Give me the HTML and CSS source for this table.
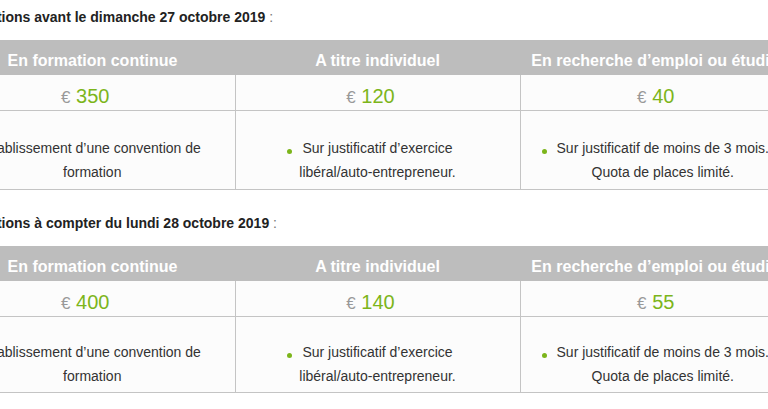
FILE: index.html
```html
<!DOCTYPE html>
<html lang="fr">
<head>
<meta charset="utf-8">
<title>Tarifs</title>
<link rel="stylesheet" href="styles.css">
</head>
<body>
<div class="page">
  <section class="tarifs">
    <p class="tarifs-title"><strong>Inscriptions avant le dimanche 27 octobre 2019</strong> :</p>
    <table class="tarifs-table">
      <thead>
        <tr>
          <th>En formation continue</th>
          <th>A titre individuel</th>
          <th>En recherche d’emploi ou étudiant</th>
        </tr>
      </thead>
      <tbody>
        <tr class="price-row">
          <td><span class="cur">€</span> <span class="amount">350</span></td>
          <td><span class="cur">€</span> <span class="amount">120</span></td>
          <td><span class="cur">€</span> <span class="amount">40</span></td>
        </tr>
        <tr class="desc-row">
          <td><ul><li>Établissement d’une convention de<br>formation</li></ul></td>
          <td><ul><li>Sur justificatif d’exercice<br>libéral/auto-entrepreneur.</li></ul></td>
          <td><ul><li>Sur justificatif de moins de 3 mois.<br>Quota de places limité.</li></ul></td>
        </tr>
      </tbody>
    </table>
  </section>
  <section class="tarifs">
    <p class="tarifs-title"><strong>Inscriptions à compter du lundi 28 octobre 2019</strong> :</p>
    <table class="tarifs-table">
      <thead>
        <tr>
          <th>En formation continue</th>
          <th>A titre individuel</th>
          <th>En recherche d’emploi ou étudiant</th>
        </tr>
      </thead>
      <tbody>
        <tr class="price-row">
          <td><span class="cur">€</span> <span class="amount">400</span></td>
          <td><span class="cur">€</span> <span class="amount">140</span></td>
          <td><span class="cur">€</span> <span class="amount">55</span></td>
        </tr>
        <tr class="desc-row">
          <td><ul><li>Établissement d’une convention de<br>formation</li></ul></td>
          <td><ul><li>Sur justificatif d’exercice<br>libéral/auto-entrepreneur.</li></ul></td>
          <td><ul><li>Sur justificatif de moins de 3 mois.<br>Quota de places limité.</li></ul></td>
        </tr>
      </tbody>
    </table>
  </section>
</div>
</body>
</html>
```
FILE: styles.css
```css
html, body {
  margin: 0;
  padding: 0;
  background: #ffffff;
  overflow: hidden;
}
body {
  font-family: "Liberation Sans", Arial, sans-serif;
  color: #333333;
}
.page {
  width: 855px;
  margin-left: -50px;
}
.tarifs-title {
  margin: 7px 0 13px;
  font-size: 14px;
  line-height: 20px;
  color: #777777;
  text-indent: 1px;
}
.tarifs + .tarifs .tarifs-title {
  margin-top: 23px;
}
.tarifs-title strong {
  color: #222222;
  font-weight: bold;
}
.tarifs-table {
  width: 855px;
  table-layout: fixed;
  border-collapse: collapse;
}
.tarifs-table th {
  background: #bdbdbd;
  color: #ffffff;
  font-size: 16px;
  font-weight: bold;
  line-height: 22px;
  padding: 10px 10px 3px;
  text-align: center;
  white-space: nowrap;
  overflow: hidden;
}
.tarifs-table td {
  background: #fcfcfc;
  border-bottom: 1px solid #c4c4c4;
  border-left: 1px solid #c4c4c4;
  text-align: center;
  vertical-align: top;
}
.tarifs-table td:first-child {
  border-left: none;
}
.price-row td {
  padding: 7px 14px 0 0;
  font-size: 20px;
  line-height: 28px;
  height: 28px;
}
.cur {
  color: #999999;
  font-size: 17px;
  line-height: 1;
}
.amount {
  color: #7cb51b;
  font-size: 20px;
}
.desc-row td {
  padding: 25px 10px 5px;
  font-size: 14px;
  line-height: 24px;
  color: #333333;
}
.tarifs + .tarifs .desc-row td {
  padding: 23px 10px 4px;
}
.desc-row ul {
  margin: 0;
  padding: 0;
  list-style: none;
}
.desc-row li::before {
  content: "";
  display: inline-block;
  width: 5px;
  height: 5px;
  border-radius: 50%;
  background: #7cb51b;
  margin-left: -15px;
  margin-right: 10px;
  vertical-align: -1px;
}
```
